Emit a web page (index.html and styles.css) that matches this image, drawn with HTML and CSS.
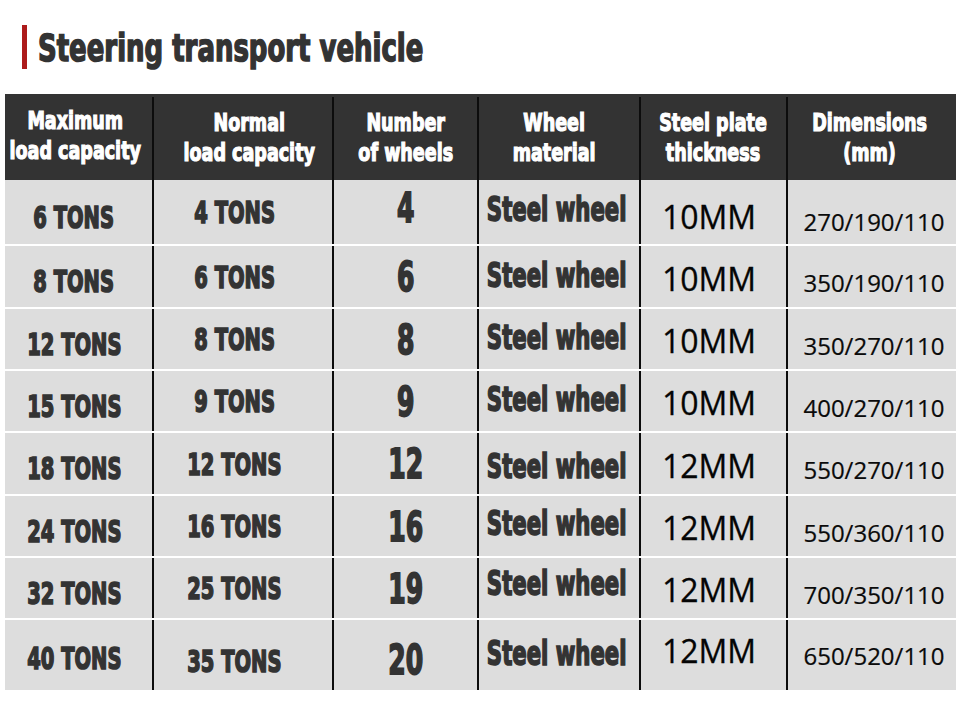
FILE: index.html
```html
<!DOCTYPE html>
<html lang="en">
<head>
<meta charset="utf-8">
<title>Steering transport vehicle</title>
<link rel="stylesheet" href="styles.css">
</head>
<body>
<div class="title-row">
  <span class="title-bar"></span>
  <h1 class="title"><span class="t">Steering transport vehicle</span></h1>
</div>
<div class="spec-table">
  <div class="row head">
    <div class="cell h1"><span class="t">Maximum<br>load capacity</span></div>
    <div class="cell h2"><span class="t">Normal<br>load capacity</span></div>
    <div class="cell h3"><span class="t">Number<br>of wheels</span></div>
    <div class="cell h4"><span class="t">Wheel<br>material</span></div>
    <div class="cell h5"><span class="t">Steel plate<br>thickness</span></div>
    <div class="cell h6"><span class="t">Dimensions<br>(mm)</span></div>
  </div>
  <div class="row body r1">
    <div class="cell tons c1"><span class="t">6 TONS</span></div><div class="cell tons c2"><span class="t">4 TONS</span></div><div class="cell num c3"><span class="t">4</span></div><div class="cell mat c4"><span class="t">Steel wheel</span></div><div class="cell mm c5">10MM</div><div class="cell dim c6">270/190/110</div>
  </div>
  <div class="row body r2">
    <div class="cell tons c1"><span class="t">8 TONS</span></div><div class="cell tons c2"><span class="t">6 TONS</span></div><div class="cell num c3"><span class="t">6</span></div><div class="cell mat c4"><span class="t">Steel wheel</span></div><div class="cell mm c5">10MM</div><div class="cell dim c6">350/190/110</div>
  </div>
  <div class="row body r3">
    <div class="cell tons c1"><span class="t">12 TONS</span></div><div class="cell tons c2"><span class="t">8 TONS</span></div><div class="cell num c3"><span class="t">8</span></div><div class="cell mat c4"><span class="t">Steel wheel</span></div><div class="cell mm c5">10MM</div><div class="cell dim c6">350/270/110</div>
  </div>
  <div class="row body r4">
    <div class="cell tons c1"><span class="t">15 TONS</span></div><div class="cell tons c2"><span class="t">9 TONS</span></div><div class="cell num c3"><span class="t">9</span></div><div class="cell mat c4"><span class="t">Steel wheel</span></div><div class="cell mm c5">10MM</div><div class="cell dim c6">400/270/110</div>
  </div>
  <div class="row body r5">
    <div class="cell tons c1"><span class="t">18 TONS</span></div><div class="cell tons c2"><span class="t">12 TONS</span></div><div class="cell num c3"><span class="t">12</span></div><div class="cell mat c4"><span class="t">Steel wheel</span></div><div class="cell mm c5">12MM</div><div class="cell dim c6">550/270/110</div>
  </div>
  <div class="row body r6">
    <div class="cell tons c1"><span class="t">24 TONS</span></div><div class="cell tons c2"><span class="t">16 TONS</span></div><div class="cell num c3"><span class="t">16</span></div><div class="cell mat c4"><span class="t">Steel wheel</span></div><div class="cell mm c5">12MM</div><div class="cell dim c6">550/360/110</div>
  </div>
  <div class="row body r7">
    <div class="cell tons c1"><span class="t">32 TONS</span></div><div class="cell tons c2"><span class="t">25 TONS</span></div><div class="cell num c3"><span class="t">19</span></div><div class="cell mat c4"><span class="t">Steel wheel</span></div><div class="cell mm c5">12MM</div><div class="cell dim c6">700/350/110</div>
  </div>
  <div class="row body r8">
    <div class="cell tons c1"><span class="t">40 TONS</span></div><div class="cell tons c2"><span class="t">35 TONS</span></div><div class="cell num c3"><span class="t">20</span></div><div class="cell mat c4"><span class="t">Steel wheel</span></div><div class="cell mm c5">12MM</div><div class="cell dim c6">650/520/110</div>
  </div>
</div>
</body>
</html>
```

FILE: styles.css
```css
html, body {
  margin: 0;
  padding: 0;
  background: #ffffff;
}

body {
  width: 960px;
  height: 727px;
  overflow: hidden;
}

.t {
  display: inline-block;
  white-space: nowrap;
}

/* ---------- title ---------- */
.title-row {
  display: flex;
  align-items: flex-start;
  margin: 25px 0 0 22px;
  height: 46px;
}

.title-bar {
  width: 5px;
  height: 44px;
  background: #ad1b1b;
  flex: none;
}

.title {
  margin: 0 0 0 11px;
  padding-top: 2px;
  font-family: "DejaVu Sans Condensed", "DejaVu Sans", sans-serif;
  font-weight: 700;
  font-size: 37px;
  line-height: 44px;
  color: #333333;
  white-space: nowrap;
}

.title .t {
  transform: scaleX(0.78);
  transform-origin: left center;
  -webkit-text-stroke: 1.5px #333333;
}

/* ---------- table ---------- */
.spec-table {
  margin: 23px 0 0 5px;
  width: 951px;
  display: flex;
  flex-direction: column;
  background: #ffffff;
}

.row {
  display: grid;
  grid-template-columns: 147px 178px 143px 160px 145px 168px;
  grid-template-rows: minmax(0, 1fr);
  column-gap: 2px;
  background: #0c0c0c;
}

.row.body {
  margin-top: 2px;
}

.row.head + .row.body {
  margin-top: 0;
}

.cell {
  display: flex;
  align-items: center;
  justify-content: center;
  text-align: center;
  background: #dddddd;
  box-sizing: border-box;
  white-space: nowrap;
  min-width: 0;
}

/* header */
.head {
  height: 86px;
  background: linear-gradient(#333333 0 3px, #0c0c0c 3px);
}

.head .cell {
  background: #333333;
  color: #ffffff;
  font-family: "DejaVu Sans Condensed", "DejaVu Sans", sans-serif;
  font-weight: 700;
  font-size: 25px;
  line-height: 30px;
}

.head .t {
  transform: scaleX(0.78);
  -webkit-text-stroke: 1.2px #ffffff;
}

.head .h1 { padding-right: 7px; padding-bottom: 2px; }
.head .h2 { padding-left: 12px; padding-top: 1px; }
.head .h3 { padding-top: 1px; }
.head .h4 { padding-right: 10px; padding-top: 1px; }
.head .h5 { padding-right: 1px; padding-top: 1px; }
.head .h6 { padding-right: 4px; padding-top: 1px; }

/* body rows */
.r1 { height: 64px; }
.r2 { height: 61px; }
.r3 { height: 60px; }
.r4 { height: 60px; }
.r5 { height: 61px; }
.r6 { height: 60px; }
.r7 { height: 60px; }
.r8 { height: 70px; }

.tons, .num, .mat {
  font-family: "DejaVu Sans Condensed", "DejaVu Sans", sans-serif;
  font-weight: 700;
  color: #333333;
  line-height: 1.2;
}

.tons .t, .num .t, .mat .t {
  -webkit-text-stroke: 1.6px #333333;
}

.tons { font-size: 31px; }
.tons .t { transform: scaleX(0.7); }

.num { font-size: 41px; }
.num .t { transform: scaleX(0.68); -webkit-text-stroke: 1.8px #333333; }

.mat { font-size: 33px; }
.mat .t { transform: scaleX(0.715); }

.mm {
  font-family: "Open Sans", "Noto Sans", sans-serif;
  font-weight: 400;
  font-size: 32px;
  color: #050505;
  line-height: 1.3;
  -webkit-text-stroke: 0.3px #050505;
}

.dim {
  font-family: "Open Sans", "Noto Sans", sans-serif;
  font-weight: 400;
  font-size: 24px;
  color: #0a0a0a;
  line-height: 1.3;
  -webkit-text-stroke: 0.2px #0a0a0a;
}

/* column alignment (the source image is not perfectly centred) */
.body .c1 { padding-top: 11px; padding-right: 9px; }
.body .c2 { padding-top: 2px; padding-right: 17px; }
.body .c3 { padding-top: 3px; }
.body .c4 { padding-bottom: 2px; padding-right: 4px; }
.body .c5 { padding-top: 4px; padding-right: 9px; }
.body .c6 { padding-top: 13px; padding-left: 4px; }

/* per-row deviations */
.r1 .c3 { padding-top: 0; padding-bottom: 7px; }
.r1 .c4 { padding-bottom: 5px; }
.r1 .c5 { padding-top: 10px; }
.r1 .c6 { padding-top: 19px; }
.r5 .c4 { padding-bottom: 0; padding-top: 6px; }
.r6 .c4 { padding-bottom: 5px; }
.r7 .c4 { padding-bottom: 8px; }
.r8 .c1 { padding-top: 7px; }
.r8 .c2 { padding-top: 13px; }
.r8 .c3 { padding-top: 11px; }
.r8 .c5 { padding-top: 0; padding-bottom: 8px; }
.r8 .c6 { padding-top: 1px; }
```
